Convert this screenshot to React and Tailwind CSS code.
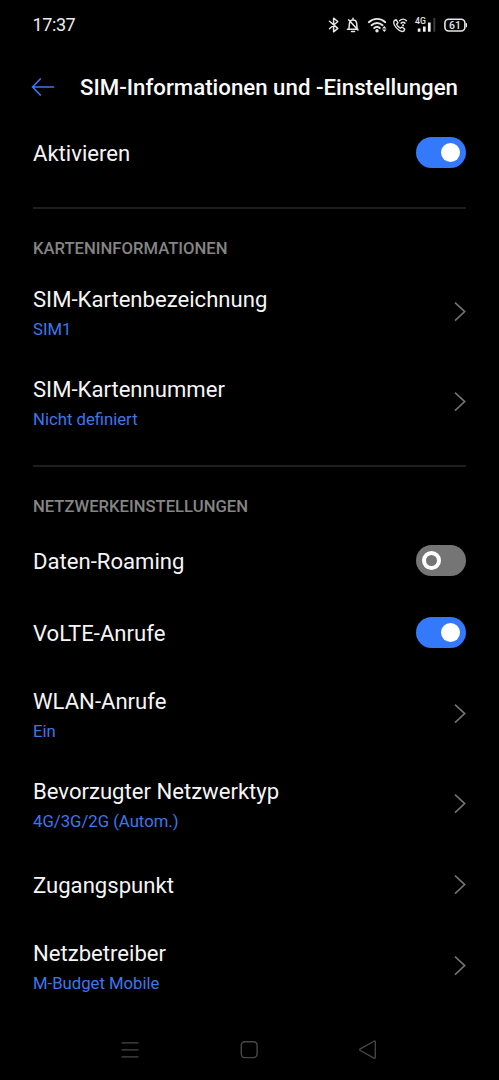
import React from "react";

function StatusBar() {
  return (
    <div className="flex h-[50px] shrink-0 items-center justify-between pl-[32.5px] pr-8">
      <span className="text-[18px] leading-6 tracking-[-0.4px] text-[#ededed]">17:37</span>
      <svg width="140" height="24" viewBox="327 13 140 24" fill="none" stroke="#e6e6e6" strokeWidth="1.5" strokeLinecap="round" strokeLinejoin="round">
        <path d="M329.5 21.2l8.3 7.2-4.2 3.4V18.2l4.2 3.3-8.3 7.2" />
        <path d="M347.400 29.300h10.400M348.900 29l.5-5.300c.2-2.300 1.500-3.700 3.600-3.700s3.500 1.400 3.700 3.700l.4 4.500M353 18.300v1.300M351.500 31.500h3M348.600 19.800l9.400 10.200" strokeWidth="1.5" />
        <path d="M368.8 22.2c4.7-4.4 12-4.4 16.5 0M371.5 25.2c3.2-3 7.9-3 11.1 0M374.2 28c1.7-1.6 3.9-1.6 5.6 0" strokeWidth="1.9" />
        <circle cx="377" cy="30.7" r="1.7" fill="#e6e6e6" stroke="none" />
        <path d="M382.1 28.4l2.2-2.4 2.2 2.4zM382.1 29.6l2.2 2.400 2.200-2.400z" fill="#e6e6e6" stroke="none" />
        <path d="M394.2 20.6l1.900-.9 1.900 3-1.300 1.500c.7 1.900 1.900 3.100 3.700 4l1.500-1.200 2.800 2-.9 2.100c-1.600.7-4.800-.5-7.100-3-2.400-2.600-3.400-5.800-2.500-7.500z" strokeWidth="1.4" />
        <path d="M399.6 20.7c2-1.900 4.900-1.900 6.800 0M401.2 23.1c1.100-1.100 2.600-1.100 3.700 0" strokeWidth="1.5" />
        <circle cx="403.1" cy="25.3" r="1.1" fill="#e6e6e6" stroke="none" />
        <text x="415" y="24.3" fill="#e6e6e6" stroke="none" fontSize="9.5" fontWeight="500" fontFamily="Roboto, sans-serif" textLength="10.8" lengthAdjust="spacingAndGlyphs">4G</text>
        <path d="M419.1 28.400v3.400M424.300 26.500v5.300M429.300 22.500v9.300" strokeWidth="2.7" strokeLinecap="butt" stroke="#f0f0f0" />
        <path d="M434.3 18v13.800" stroke="#3b3b3b" strokeWidth="2" strokeLinecap="butt" />
        <rect x="444.9" y="19.2" width="20" height="11.8" rx="3.8" strokeWidth="1.6" />
        <path d="M466.4 23.5v3.200" strokeWidth="1.2" />
        <text x="449" y="28.9" fill="#e6e6e6" stroke="none" fontSize="10.5" fontWeight="500" fontFamily="Roboto, sans-serif" textLength="11.8" lengthAdjust="spacingAndGlyphs">61</text>
      </svg>
    </div>
  );
}

function Header() {
  return (
    <header className="flex h-[67px] shrink-0 items-center pl-[31px] pt-[7px]">
      <svg className="shrink-0" width="24" height="20" viewBox="0 0 24 20" fill="none" stroke="#3a78ee" strokeWidth="1.7" strokeLinecap="round" strokeLinejoin="round">
        <path d="M9.3 2L1.5 10l7.8 8M1.5 10h21" />
      </svg>
      <h1 className="ml-[25px] whitespace-nowrap text-[22.25px] font-medium leading-[30px] text-[#fafafa]">SIM-Informationen und -Einstellungen</h1>
    </header>
  );
}

function Switch({ on = false }) {
  return on ? (
    <span role="switch" aria-checked="true" className="mb-px flex h-[31px] w-[50px] items-center justify-end rounded-full bg-[#3478fb] pr-[6px]">
      <span className="size-[19px] rounded-full bg-white" />
    </span>
  ) : (
    <span role="switch" aria-checked="false" className="mb-px flex h-[31px] w-[50px] items-center rounded-full bg-[#757575] pl-[5.5px]">
      <span className="size-[19px] rounded-full border-4 border-white" />
    </span>
  );
}

function Chevron() {
  return (
    <svg width="13" height="20" viewBox="0 0 13 20" fill="none" stroke="#727272" strokeWidth="1.6">
      <path d="M2 .6l9.7 9-9.7 9" />
    </svg>
  );
}

function ToggleRow({ title, on }) {
  return (
    <div className="flex h-[72px] items-center justify-between">
      <span className="text-[22.1px] leading-[30px]">{title}</span>
      <Switch on={on} />
    </div>
  );
}

function LinkRow({ title, value }) {
  return (
    <div className={value ? "flex h-[90px] items-center justify-between" : "flex h-[72px] items-center justify-between"}>
      <div className={value ? "flex flex-col pt-0.5" : "flex flex-col"}>
        <span className="text-[22.1px] leading-[30px]">{title}</span>
        {value && <span className="mt-1 text-[16.7px] leading-6 text-[#3a78ee]">{value}</span>}
      </div>
      <Chevron />
    </div>
  );
}

function SectionLabel({ children }) {
  return (
    <h2 className="mt-[18px] flex h-[60px] items-center border-t-2 border-[#1f1f1f] pt-[21px] text-[16.65px] font-medium leading-6 text-[#858585]">
      {children}
    </h2>
  );
}

function NavBar() {
  return (
    <nav className="mt-auto flex h-[61px] shrink-0 items-center justify-between pl-[121px] pr-[122px]">
      <svg width="18" height="18" viewBox="0 0 18 18" stroke="#484848" strokeWidth="1.3">
        <path d="M.5 1.8h17M.5 8.8h17M.5 15.8h17" />
      </svg>
      <svg width="18" height="18" viewBox="0 0 18 18" fill="none" stroke="#484848" strokeWidth="1.4">
        <rect x="1.3" y=".8" width="15.8" height="15.8" rx="3.5" />
      </svg>
      <svg width="18" height="20" viewBox="0 0 18 20" fill="none" stroke="#484848" strokeWidth="1.3" strokeLinejoin="round">
        <path d="M15 1.2L1.3 8.9c-.8.5-.8 1.100 0 1.600L15 18.100c.7.400 1.300.1 1.300-.7V1.900c0-.8-.6-1.100-1.300-.7z" />
      </svg>
    </nav>
  );
}

export default function App() {
  return (
    <div className="flex h-[1080px] w-[499px] flex-col overflow-hidden bg-black text-[#f5f5f5] font-['Roboto',sans-serif]">
      <StatusBar />
      <Header />
      <main className="flex flex-col px-[33px]">
        <ToggleRow title="Aktivieren" on />
        <SectionLabel>KARTENINFORMATIONEN</SectionLabel>
        <LinkRow title="SIM-Kartenbezeichnung" value="SIM1" />
        <LinkRow title="SIM-Kartennummer" value="Nicht definiert" />
        <SectionLabel>NETZWERKEINSTELLUNGEN</SectionLabel>
        <ToggleRow title="Daten-Roaming" />
        <ToggleRow title="VoLTE-Anrufe" on />
        <LinkRow title="WLAN-Anrufe" value="Ein" />
        <LinkRow title="Bevorzugter Netzwerktyp" value="4G/3G/2G (Autom.)" />
        <LinkRow title="Zugangspunkt" />
        <LinkRow title="Netzbetreiber" value="M-Budget Mobile" />
      </main>
      <NavBar />
    </div>
  );
}
